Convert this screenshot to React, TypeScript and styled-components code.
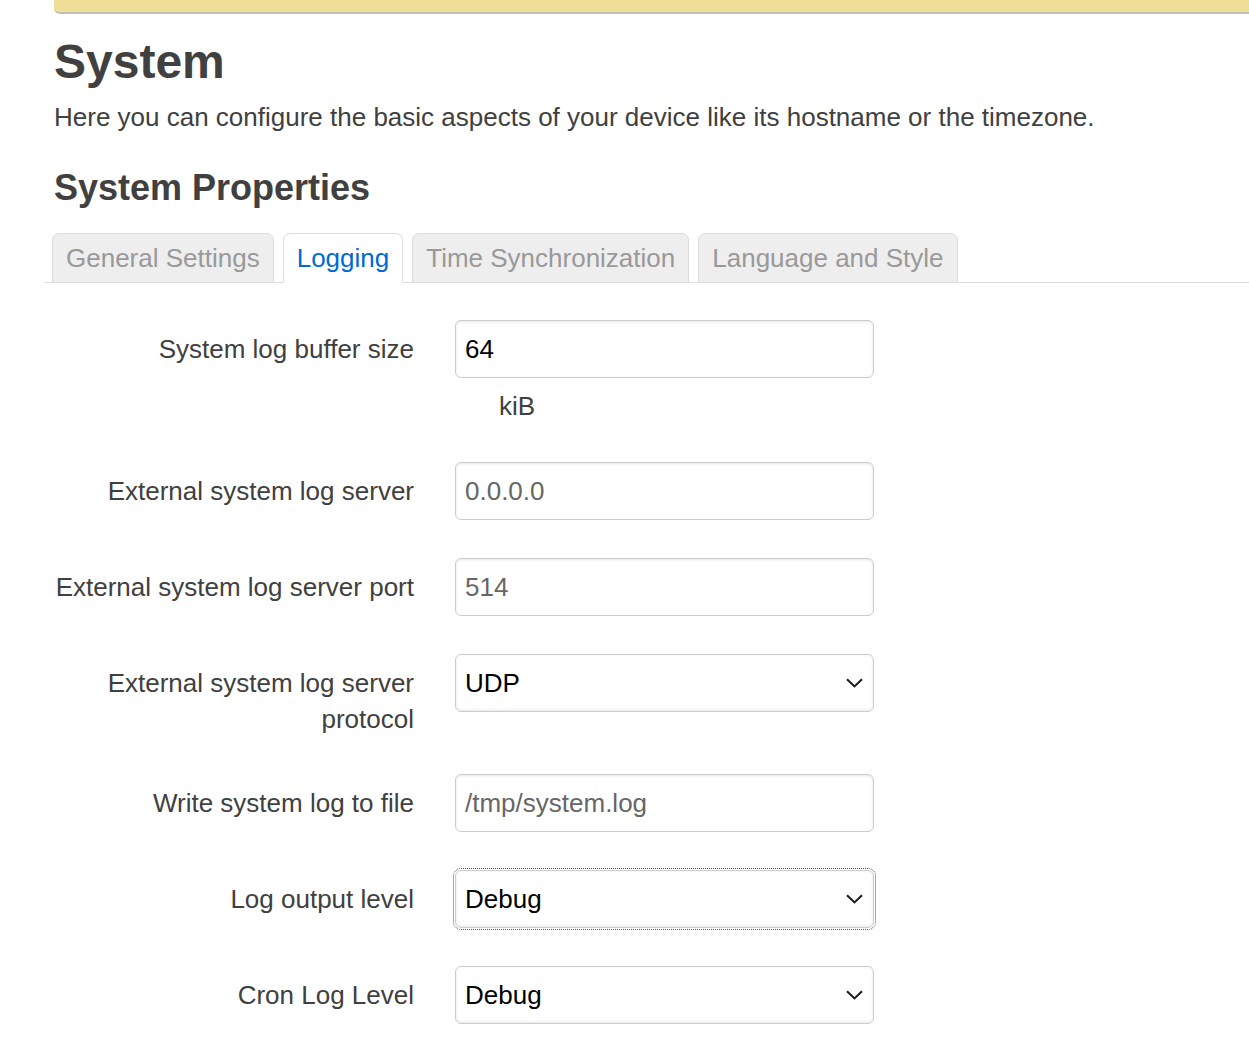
import React from "react";
import styled, { createGlobalStyle } from "styled-components";

const Global = createGlobalStyle`
  html, body { margin: 0; padding: 0; background: #fff; }
  body {
    font-family: "Liberation Sans", Arial, sans-serif;
    color: #404040;
    overflow: hidden;
  }
`;

const Page = styled.div`
  padding-left: 44px;
  overflow: hidden;
  width: 1249px;
  box-sizing: border-box;
`;

const AlertBar = styled.div`
  margin-left: 10px;
  margin-right: -20px;
  height: 12px;
  background: #f0dd98;
  border-bottom: 2px solid #c4c0b4;
  border-bottom-left-radius: 6px;
`;

const Inner = styled.div`
  padding-left: 10px;
`;

const Title = styled.h2`
  margin: 19px 0 0;
  font-size: 48px;
  line-height: 58px;
  font-weight: bold;
  color: #404040;
`;

const Intro = styled.p`
  margin: 8px 0 0;
  font-size: 26px;
  line-height: 36px;
  color: #404040;
`;

const Subtitle = styled.h3`
  margin: 31px 0 0;
  font-size: 36px;
  line-height: 44px;
  font-weight: bold;
  color: #404040;
`;

const TabBar = styled.ul`
  list-style: none;
  margin: 23px 0 0;
  padding: 0 0 0 8px;
  display: flex;
  gap: 9px;
  border-bottom: 1px solid #ddd;
`;

const Tab = styled.li<{ $active?: boolean }>`
  margin-bottom: -1px;
  padding: 6px 13px 6px 13px;
  font-size: 26px;
  line-height: 36px;
  border: 1px solid #ddd;
  border-bottom: 1px solid ${(p) => (p.$active ? "#fff" : "#ddd")};
  border-radius: 7px 7px 0 0;
  background: ${(p) => (p.$active ? "#fff" : "#eee")};
  color: ${(p) => (p.$active ? "#0069d6" : "#999")};
`;

const Form = styled.div`
  padding-top: 37px;
  display: flex;
  flex-direction: column;
`;

const Row = styled.div`
  display: grid;
  grid-template-columns: 370px 419px;
  column-gap: 41px;
  padding-bottom: 38px;
`;

const Label = styled.label`
  text-align: right;
  font-size: 26px;
  line-height: 36px;
  padding-top: 11px;
  margin-bottom: -1px;
  color: #404040;
`;

const Field = styled.div`
  display: flex;
  flex-direction: column;
`;

const TextInput = styled.input`
  box-sizing: border-box;
  width: 419px;
  height: 58px;
  margin: 0;
  padding: 0 9px;
  border: 1px solid #ccc;
  border-radius: 6px;
  box-shadow: inset 0 1px 3px rgba(0, 0, 0, 0.1);
  font-family: "Liberation Sans", Arial, sans-serif;
  font-size: 26px;
  color: #000;
  background: #fff;
  outline: none;
  &::placeholder { color: #666; opacity: 1; }
`;

const SelectWrap = styled.div<{ $focused?: boolean }>`
  position: relative;
  width: 419px;
  height: 58px;
  border-radius: 6px;
  outline: ${(p) => (p.$focused ? "1px dotted #555" : "none")};
  outline-offset: 1px;
`;

const Select = styled.select`
  box-sizing: border-box;
  appearance: none;
  width: 100%;
  height: 100%;
  margin: 0;
  padding: 0 40px 0 9px;
  border: 1px solid #ccc;
  border-radius: 6px;
  box-shadow: inset 0 -1px 3px rgba(0, 0, 0, 0.1);
  font-family: "Liberation Sans", Arial, sans-serif;
  font-size: 26px;
  color: #000;
  background: #fff;
  outline: none;
`;

const Chevron = styled.svg`
  position: absolute;
  right: 11px;
  top: 24px;
  width: 17px;
  height: 10px;
  pointer-events: none;
`;

const Hint = styled.div`
  margin-top: 10px;
  padding-left: 44px;
  font-size: 26px;
  line-height: 36px;
  color: #404040;
`;

const ChevronIcon = () => (
  <Chevron viewBox="0 0 17 10">
    <path d="M1 1.2 L8.5 8.4 L16 1.2" fill="none" stroke="#1a1a1a" strokeWidth="2" />
  </Chevron>
);

const SelectField = ({ value, options, focused }: { value: string; options: string[]; focused?: boolean }) => (
  <SelectWrap $focused={focused}>
    <Select defaultValue={value}>
      {options.map((o) => (
        <option key={o} value={o}>{o}</option>
      ))}
    </Select>
    <ChevronIcon />
  </SelectWrap>
);

const levels = ["Debug", "Info", "Notice", "Warning", "Error", "Critical", "Alert", "Emergency"];

export default function App() {
  return (
    <>
      <Global />
      <Page>
        <AlertBar />
        <Inner>
          <Title>System</Title>
          <Intro>Here you can configure the basic aspects of your device like its hostname or the timezone.</Intro>
          <Subtitle>System Properties</Subtitle>
        </Inner>
        <TabBar>
          <Tab>General Settings</Tab>
          <Tab $active>Logging</Tab>
          <Tab>Time Synchronization</Tab>
          <Tab>Language and Style</Tab>
        </TabBar>
        <Form>
          <Row>
            <Label>System log buffer size</Label>
            <Field>
              <TextInput defaultValue="64" />
              <Hint>kiB</Hint>
            </Field>
          </Row>
          <Row>
            <Label>External system log server</Label>
            <Field>
              <TextInput placeholder="0.0.0.0" />
            </Field>
          </Row>
          <Row>
            <Label>External system log server port</Label>
            <Field>
              <TextInput placeholder="514" />
            </Field>
          </Row>
          <Row>
            <Label>External system log server<br />protocol</Label>
            <Field>
              <SelectField value="UDP" options={["UDP", "TCP"]} />
            </Field>
          </Row>
          <Row>
            <Label>Write system log to file</Label>
            <Field>
              <TextInput placeholder="/tmp/system.log" />
            </Field>
          </Row>
          <Row>
            <Label>Log output level</Label>
            <Field>
              <SelectField value="Debug" options={levels} focused />
            </Field>
          </Row>
          <Row>
            <Label>Cron Log Level</Label>
            <Field>
              <SelectField value="Debug" options={["Debug", "Normal", "Warning"]} />
            </Field>
          </Row>
        </Form>
      </Page>
    </>
  );
}
